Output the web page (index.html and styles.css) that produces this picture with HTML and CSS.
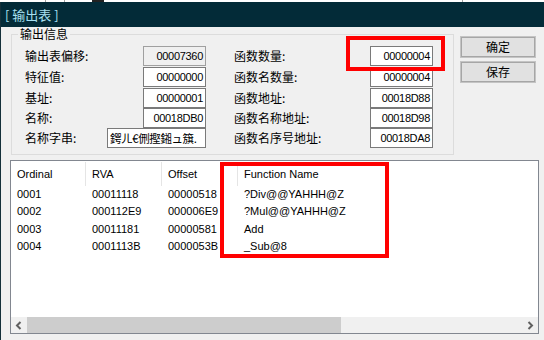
FILE: index.html
```html
<!DOCTYPE html>
<html>
<head>
<meta charset="utf-8">
<link rel="stylesheet" href="styles.css">
</head>
<body>
<div class="screen">
  <div class="topstrip"></div>
  <div class="window">
    <div class="titlebar"><span class="title">[ 输出表 ]</span></div>
    <div class="top">
      <fieldset class="group">
        <legend>输出信息</legend>
        <div class="rows">
          <div class="row r21">
            <div class="pair left"><span class="lbl">输出表偏移:</span><span class="field ro">00007360</span></div>
            <div class="pair right"><span class="lbl">函数数量:</span><span class="field">00000004</span></div>
          </div>
          <div class="row r21">
            <div class="pair left"><span class="lbl">特征值:</span><span class="field">00000000</span></div>
            <div class="pair right"><span class="lbl">函数名数量:</span><span class="field">00000004</span></div>
          </div>
          <div class="row r20">
            <div class="pair left"><span class="lbl">基址:</span><span class="field">00000001</span></div>
            <div class="pair right"><span class="lbl">函数地址:</span><span class="field">00018D88</span></div>
          </div>
          <div class="row r20">
            <div class="pair left"><span class="lbl">名称:</span><span class="field">00018DB0</span></div>
            <div class="pair right"><span class="lbl">函数名称地址:</span><span class="field">00018D98</span></div>
          </div>
          <div class="row r21">
            <div class="pair left"><span class="lbl">名称字串:</span><span class="field wide">鍔ㄦ€侀摼鎺ュ簱.</span></div>
            <div class="pair right"><span class="lbl">函数名序号地址:</span><span class="field">00018DA8</span></div>
          </div>
        </div>
      </fieldset>
      <div class="buttons">
        <button class="btn">确定</button>
        <button class="btn">保存</button>
      </div>
    </div>
    <div class="list">
      <div class="lhead">
        <span class="hc c1">Ordinal</span>
        <span class="hc c2">RVA</span>
        <span class="hc c3">Offset</span>
        <span class="hc c4">Function Name</span>
      </div>
      <div class="lbody">
        <div class="lrow"><span class="c1">0001</span><span class="c2">00011118</span><span class="c3">00000518</span><span class="c4">?Div@@YAHHH@Z</span></div>
        <div class="lrow"><span class="c1">0002</span><span class="c2">000112E9</span><span class="c3">000006E9</span><span class="c4">?Mul@@YAHHH@Z</span></div>
        <div class="lrow"><span class="c1">0003</span><span class="c2">00011181</span><span class="c3">00000581</span><span class="c4">Add</span></div>
        <div class="lrow"><span class="c1">0004</span><span class="c2">0001113B</span><span class="c3">0000053B</span><span class="c4">_Sub@8</span></div>
      </div>
      <div class="hscroll">
        <span class="sbtn"><svg width="8" height="9" viewBox="0 0 8 9"><polyline points="5.5,1 2,4.5 5.5,8" fill="none" stroke="#606060" stroke-width="2"/></svg></span>
        <span class="thumb"></span>
        <span class="track"></span>
        <span class="sbtn"><svg width="8" height="9" viewBox="0 0 8 9"><polyline points="2.5,1 6,4.5 2.5,8" fill="none" stroke="#606060" stroke-width="2"/></svg></span>
      </div>
    </div>
  </div>
  <div class="mark mark1"></div>
  <div class="mark mark2"></div>
</div>
</body>
</html>
```
FILE: styles.css
```css
html, body {
  margin: 0;
  padding: 0;
  background: #f0f0f0;
}
.screen {
  position: relative;
  width: 544px;
  height: 340px;
  overflow: hidden;
  background: #f0f0f0;
  font-family: "Liberation Sans", "Noto Sans CJK SC", sans-serif;
  color: #000;
}
.topstrip {
  height: 2px;
  background:
    linear-gradient(to right, transparent 45px, #a0a0a0 45px, #a0a0a0 46px, transparent 46px, transparent 64px, #a0a0a0 64px, #a0a0a0 65px, transparent 65px, transparent 92px, #222 92px, #222 104px, transparent 104px, transparent 462px, #a0a0a0 462px, #a0a0a0 463px, transparent 463px),
    #fff;
}
.window {
  height: 338px;
  border-left: 1px solid #14303a;
  box-sizing: border-box;
  display: flex;
  flex-direction: column;
}
.titlebar {
  height: 25px;
  background: #032b38;
  display: flex;
  align-items: center;
  padding-left: 4px;
}
.title {
  font-family: "Noto Sans CJK SC", sans-serif;
  font-size: 13px;
  line-height: 16px;
  color: #a8e0f2;
}
.top {
  display: flex;
  align-items: flex-start;
}
.group {
  margin: 0 0 0 10px;
  padding: 0 0 5px 0;
  width: 443px;
  box-sizing: border-box;
  border: 1px solid #dcdcdc;
}
.group legend {
  margin-left: 6px;
  padding: 0 2px;
  font-family: "Noto Sans CJK SC", sans-serif;
  font-size: 12px;
  line-height: 14px;
}
.rows {
  padding: 5px 0 0 13px;
  display: flex;
  flex-direction: column;
}
.row {
  display: flex;
  gap: 28px;
  align-items: flex-start;
}
.r21 { height: 21px; }
.r20 { height: 20px; }
.pair {
  display: flex;
  align-items: center;
  justify-content: space-between;
  height: 20px;
}
.pair.left { width: 181px; }
.pair.right { width: 199px; }
.lbl {
  font-family: "Noto Sans CJK SC", sans-serif;
  font-size: 12px;
  line-height: 14px;
  white-space: nowrap;
}
.field {
  width: 63px;
  height: 20px;
  box-sizing: border-box;
  border: 1px solid #7a7a7a;
  background: #fff;
  font-size: 11px;
  line-height: 18px;
  letter-spacing: -0.3px;
  text-align: right;
  padding-right: 2px;
  white-space: nowrap;
  overflow: hidden;
}
.field.ro {
  background: #f0f0f0;
  border-color: #a0a0a0;
}
.field.wide {
  width: 99px;
  font-family: "Noto Sans CJK SC", sans-serif;
  letter-spacing: -0.4px;
  font-size: 11.5px;
  text-align: left;
  padding-left: 2px;
}
.buttons {
  margin: 9px 0 0 6px;
  display: flex;
  flex-direction: column;
  gap: 3px;
}
.btn {
  width: 76px;
  height: 22px;
  box-sizing: border-box;
  border: 1px solid #c4c4c4;
  box-shadow: inset 0 0 0 1px #a6a6a6;
  background: #e1e1e1;
  font-family: "Noto Sans CJK SC", sans-serif;
  font-size: 12px;
  line-height: 14px;
  padding: 0;
  color: #000;
}
.list {
  margin: 5px 0 0 9px;
  width: 529px;
  height: 174px;
  box-sizing: border-box;
  border: 1px solid #828790;
  background: #fff;
  display: flex;
  flex-direction: column;
  font-size: 11px;
}
.lhead {
  height: 25px;
  display: flex;
  align-items: flex-start;
}
.hc {
  margin-top: 1px;
  height: 24px;
  line-height: 24px;
  box-sizing: border-box;
  padding-left: 6px;
  border-right: 1px solid #e5e5e5;
}
.c1 { width: 75px; padding-left: 6px; box-sizing: border-box; }
.c2 { width: 76px; padding-left: 6px; box-sizing: border-box; }
.c3 { width: 76px; padding-left: 6px; box-sizing: border-box; }
.c4 { width: 160px; padding-left: 6px; box-sizing: border-box; }
.hc.c4 { border-right: none; }
.lbody {
  flex: 1;
}
.lrow {
  display: flex;
  height: 17.3px;
  line-height: 17px;
  white-space: nowrap;
}
.hscroll {
  height: 16px;
  display: flex;
  background: #f0f0f0;
}
.sbtn {
  width: 16px;
  height: 16px;
  display: flex;
  align-items: center;
  justify-content: center;
  background: #f0f0f0;
}
.thumb {
  width: 314px;
  background: #cdcdcd;
}
.track {
  flex: 1;
}
.mark {
  position: absolute;
  border: 4px solid #ff0000;
  box-sizing: border-box;
}
.mark1 {
  left: 346px;
  top: 36px;
  width: 99px;
  height: 35px;
}
.mark2 {
  left: 220px;
  top: 162px;
  width: 169px;
  height: 96px;
}
```
